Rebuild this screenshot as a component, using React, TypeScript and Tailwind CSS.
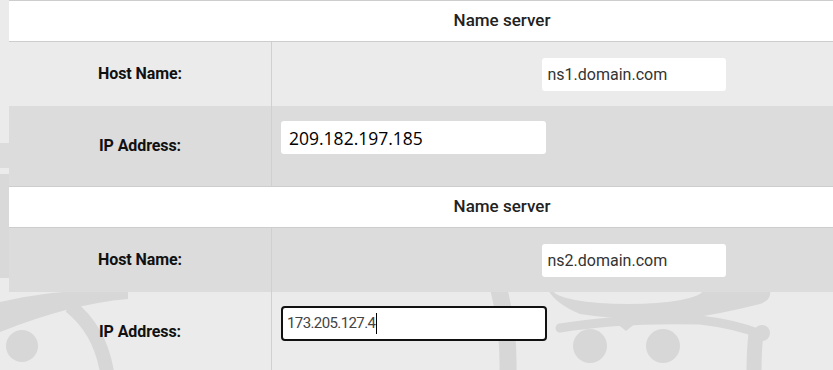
import React from 'react';

const labelClass = "font-['Roboto',sans-serif] font-bold text-[16px] tracking-[-0.1px] text-[#111]";

function Watermark() {
  return (
    <svg className="absolute inset-0 z-0" width="833" height="370" viewBox="0 0 833 370">
      <g fill="#d7d7d7" stroke="none">
        {/* strip left of the table */}
        <rect x="0" y="143" width="9" height="25" fill="#dcdcdc" />
        <rect x="0" y="174" width="9" height="104" fill="#d9d9d9" />

        {/* left figure */}
        <path d="M0 302 Q60 288 128 290 L128 299 Q70 304 0 332 Z" />
        <path d="M70 306 Q100 330 107 372" fill="none" stroke="#d7d7d7" strokeWidth="14" />
        <circle cx="22" cy="346" r="16" />

        {/* right figure: hat brim */}
        <path d="M548 290 L770 290 Q772 300 760 304 Q720 314 690 318 Q630 322 580 314 Q556 304 548 290 Z" />
        <ellipse cx="628" cy="290" rx="75" ry="14" fill="#ebebeb" />
        {/* glasses frame */}
        <path d="M560 328 Q620 318 700 320 Q735 324 760 334" fill="none" stroke="#d7d7d7" strokeWidth="9" strokeLinecap="round" />
        <circle cx="762" cy="333" r="8" />
        <path d="M610 318 L642 318 L626 331 Z" />
        <circle cx="590" cy="346" r="17" />
        <circle cx="663" cy="346" r="17" />
        <path d="M499 290 Q509 330 508 372" fill="none" stroke="#d7d7d7" strokeWidth="17" />
        <path d="M756 334 Q754 350 754 372" fill="none" stroke="#d7d7d7" strokeWidth="15" />
      </g>
    </svg>
  );
}

function HeaderRow() {
  return (
    <div className="h-[42px] bg-white border-y border-[#cdcdcd] flex items-center justify-center">
      <span className="font-['Roboto',sans-serif] font-medium text-[17px] text-[#222]">Name server</span>
    </div>
  );
}

function HostRow({ value, dark }: { value: string; dark?: boolean }) {
  return (
    <div className={`h-[64px] flex ${dark ? 'bg-[#dcdcdc]' : ''}`}>
      <div className="w-[263px] shrink-0 border-r border-[#d0d0d0] flex items-center justify-center">
        <span className={labelClass}>Host Name:</span>
      </div>
      <div className="flex-1 flex items-center justify-center">
        <input
          readOnly
          defaultValue={value}
          className="w-[184px] h-[33px] bg-white rounded-[3px] px-[6px] outline-none font-['Roboto',sans-serif] text-[16px] text-[#333]"
        />
      </div>
    </div>
  );
}

function IpRow({ children, dark }: { children: React.ReactNode; dark?: boolean }) {
  return (
    <div className={`h-[80px] flex ${dark ? 'bg-[#dcdcdc]' : ''}`}>
      <div className="w-[263px] shrink-0 border-r border-[#d0d0d0] flex items-center justify-center">
        <span className={labelClass}>IP Address:</span>
      </div>
      <div className="flex-1 pl-[9px] pt-[14px]">{children}</div>
    </div>
  );
}

export default function App() {
  return (
    <div className="relative w-[833px] h-[370px] overflow-hidden bg-[#ebebeb]">
      <Watermark />
      <div className="relative z-10 ml-[9px] w-[986px]">
        <HeaderRow />
        <HostRow value="ns1.domain.com" />
        <IpRow dark>
          <input
            readOnly
            defaultValue="209.182.197.185"
            className="mt-[1px] w-[265px] h-[33px] bg-white rounded-[3px] px-[8px] outline-none font-['Open_Sans',sans-serif] text-[17.5px] text-black"
          />
        </IpRow>
        <HeaderRow />
        <HostRow value="ns2.domain.com" dark />
        <IpRow>
          <div className="w-[266px] h-[35px] bg-white rounded-[4px] border-2 border-[#111] flex items-center pl-[4px]">
            <span className="font-['Roboto',sans-serif] text-[15px] tracking-[-0.6px] text-[#444]">173.205.127.4</span>
            <span className="ml-[1px] w-[1px] h-[21px] bg-black" />
          </div>
        </IpRow>
      </div>
    </div>
  );
}
